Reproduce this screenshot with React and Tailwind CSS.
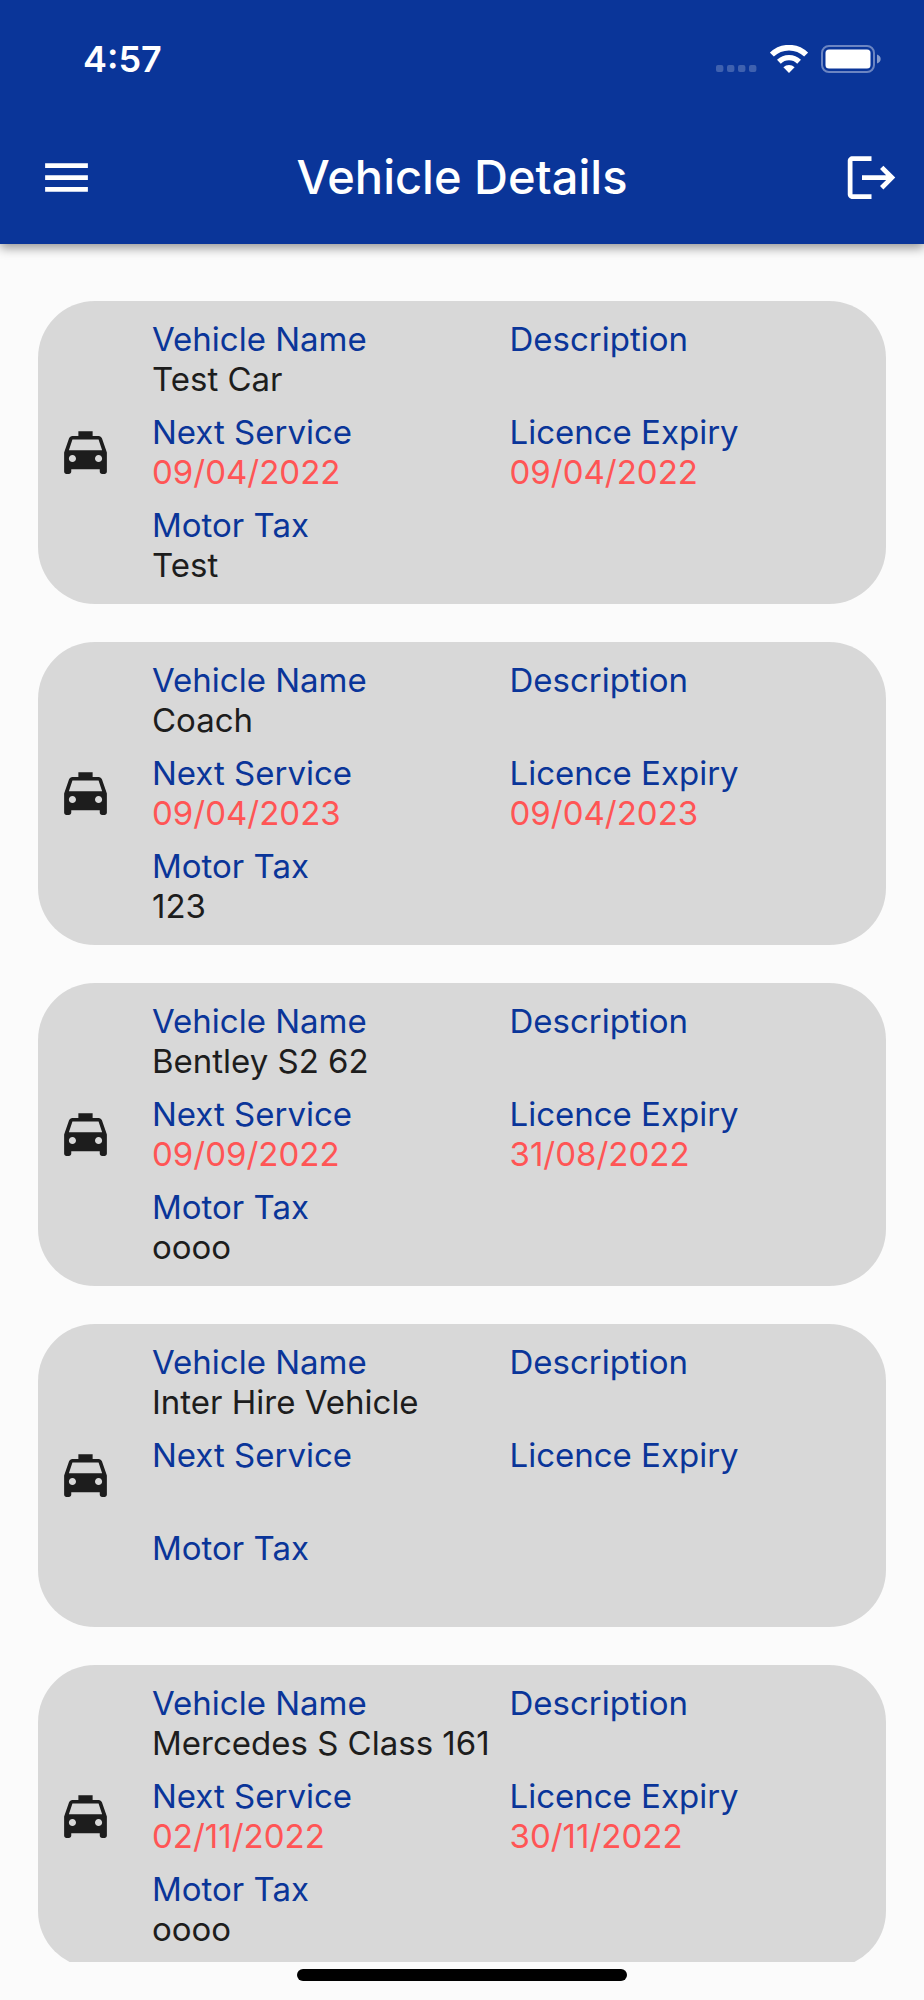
import { MdLocalTaxi, MdLogout, MdMenu } from 'react-icons/md'

const vehicles = [
  { name: 'Test Car', description: '', nextService: '09/04/2022', licenceExpiry: '09/04/2022', motorTax: 'Test' },
  { name: 'Coach', description: '', nextService: '09/04/2023', licenceExpiry: '09/04/2023', motorTax: '123' },
  { name: 'Bentley S2 62', description: '', nextService: '09/09/2022', licenceExpiry: '31/08/2022', motorTax: 'oooo' },
  { name: 'Inter Hire Vehicle', description: '', nextService: '', licenceExpiry: '', motorTax: '' },
  { name: 'Mercedes S Class 161', description: '', nextService: '02/11/2022', licenceExpiry: '30/11/2022', motorTax: 'oooo' },
]

const StatusBar = () => (
  <div className="flex items-center justify-between h-[118px] pl-[83px] pr-[43px]">
    <span className="text-[36px] leading-10 font-semibold">4:57</span>
    <div className="flex items-center gap-[13px]">
      <svg width="41" height="28" viewBox="0 0 41 28" fill="#fff" fillOpacity="0.22" aria-hidden="true">
        <rect x="0" y="20" width="7.4" height="7" rx="2" />
        <rect x="11" y="20" width="7.4" height="7" rx="2" />
        <rect x="22" y="20" width="7.4" height="7" rx="2" />
        <rect x="33" y="20" width="7.4" height="7" rx="2" />
      </svg>
      <svg width="38" height="29" viewBox="0 0 38 29" fill="none" stroke="#fff" aria-hidden="true">
        <path d="M1.9 9.6a24.5 24.5 0 0 1 34.2 0" strokeWidth="5.6" />
        <path d="M8.9 16.7a14.5 14.5 0 0 1 20.2 0" strokeWidth="5.4" />
        <path d="M13.4 22.2a8.2 8.2 0 0 1 11.2 0L19 28.1z" fill="#fff" stroke="none" />
      </svg>
      <svg width="60" height="28" viewBox="0 0 60 28" fill="none" aria-hidden="true">
        <rect x="1" y="1" width="52" height="26" rx="7" stroke="#fff" strokeOpacity="0.4" strokeWidth="2" />
        <rect x="4.5" y="4.5" width="45" height="19" rx="3.5" fill="#fff" />
        <path d="M56 9.5c2.2.8 3.7 2.5 3.7 4.5s-1.5 3.7-3.7 4.5z" fill="#fff" fillOpacity="0.5" />
      </svg>
    </div>
  </div>
)

const Field = ({ label, value, valueClass = 'text-[#1d1d1d]' }) => (
  <div>
    <dt className="text-[#0a3599]">{label}</dt>
    <dd className={`min-h-10 whitespace-nowrap ${valueClass}`}>{value}</dd>
  </div>
)

const VehicleCard = ({ vehicle }) => (
  <li className="flex items-center gap-[38px] shrink-0 rounded-[57px] bg-[#d8d8d8] px-[19px] pt-[18px] pb-[19px]">
    <MdLocalTaxi size={57} className="shrink-0 text-[#1d1d1d]" />
    <dl className="grid flex-1 grid-cols-2 gap-y-[13px] text-[33px] leading-10">
      <Field label="Vehicle Name" value={vehicle.name} />
      <Field label="Description" value={vehicle.description} />
      <Field label="Next Service" value={vehicle.nextService} valueClass="text-[#ff5555]" />
      <Field label="Licence Expiry" value={vehicle.licenceExpiry} valueClass="text-[#ff5555]" />
      <Field label="Motor Tax" value={vehicle.motorTax} />
    </dl>
  </li>
)

const App = () => {
  return (
    <div className="flex flex-col h-screen bg-[#fbfbfb] font-['Inter',sans-serif]">
      <header className="relative shrink-0 bg-[#0a3599] text-white shadow-[0_4px_10px_rgba(0,0,0,0.4)]">
        <StatusBar />
        <div className="grid grid-cols-[1fr_auto_1fr] items-center h-[126px] pb-2">
          <button type="button" aria-label="Open menu" className="justify-self-start pl-[38px]">
            <MdMenu size={57} />
          </button>
          <h1 className="text-[47px] leading-[56px] font-medium">Vehicle Details</h1>
          <button type="button" aria-label="Log out" className="justify-self-end pr-6">
            <MdLogout size={57} />
          </button>
        </div>
      </header>
      <main className="flex-1 min-h-0 overflow-y-auto [scrollbar-width:none]">
        <ul className="flex flex-col gap-[38px] px-[38px] pt-[57px] pb-[38px]">
          {vehicles.map((vehicle) => (
            <VehicleCard key={vehicle.name} vehicle={vehicle} />
          ))}
        </ul>
      </main>
      <footer className="flex justify-center shrink-0 h-[38px] pt-[7px]">
        <div className="w-[330px] h-3 rounded-full bg-black" />
      </footer>
    </div>
  )
}

export default App
